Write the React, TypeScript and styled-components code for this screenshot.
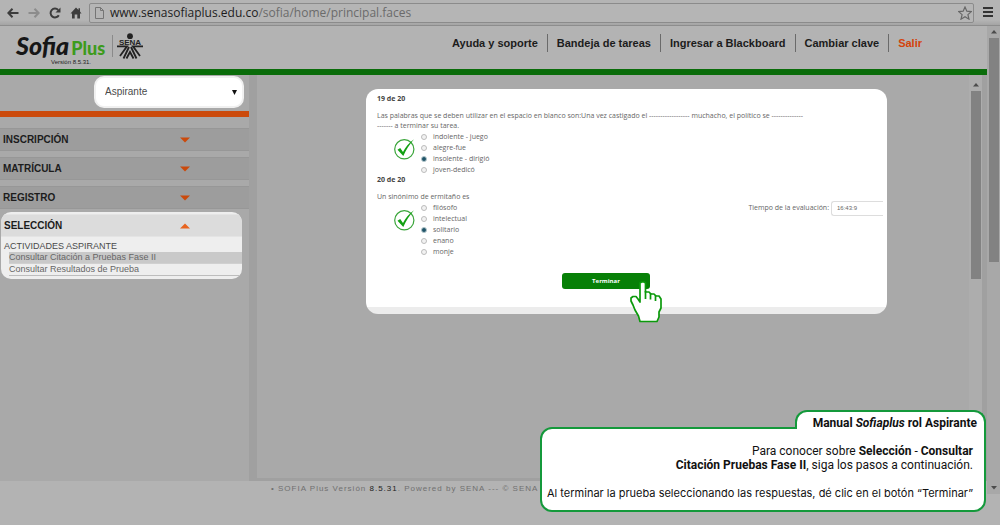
import React from 'react';
import styled, { createGlobalStyle, css } from 'styled-components';

const GlobalStyle = createGlobalStyle`
  *, *::before, *::after { box-sizing: border-box; }
  body { margin: 0; background: #b3b3b3; font-family: "Liberation Sans", Arial, sans-serif; color: #1c1c1c; }
  button, input, select { font: inherit; color: inherit; margin: 0; padding: 0; border: 0; background: none; }
  button { cursor: pointer; }
  a { color: inherit; text-decoration: none; }
  h1, h2, p, ul { margin: 0; padding: 0; font-weight: inherit; }
  ul { list-style: none; }
  svg { display: block; flex: none; }
`;

const Screen = styled.div`
  position: relative;
  display: flex;
  flex-direction: column;
  min-height: 100vh;
`;

const BrowserBar = styled.div`
  display: flex;
  align-items: center;
  height: 26px;
  padding: 0 5px 0 6px;
  background: linear-gradient(#b4b4b4 20px, #a4a4a4);
  border-bottom: 1px solid #8d8d8d;
`;

const BrowserButtons = styled.div`
  display: flex;
  gap: 7px;
  margin-right: 6px;
`;

const IconButton = styled.button`
  display: flex;
  align-items: center;
  justify-content: center;
  width: 14px;
  height: 16px;
`;

const AddressBar = styled.div`
  display: flex;
  align-items: center;
  flex: 1;
  height: 20px;
  margin-right: 7px;
  padding: 0 1px 0 5px;
  border: 1px solid #8b8b8b;
  border-radius: 2px;
  background: #b5b5b5;
  font: 12px/18px "Open Sans", "Noto Sans", sans-serif;
  color: #6b6b6b;
`;

const Url = styled.div`
  flex: 1;
  margin-left: 6px;
  b { font-weight: 400; color: #1d1d1d; }
`;

const Viewport = styled.div`
  display: flex;
  flex: 1;
`;

const Page = styled.div`
  display: flex;
  flex-direction: column;
  flex: 1;
  min-width: 0;
`;

const Header = styled.header`
  display: flex;
  justify-content: space-between;
  height: 49px;
  border-bottom: 6px solid #0a6c0a;
`;

const Brand = styled.div`
  display: flex;
  padding: 7px 0 0 16px;
`;

const Wordmark = styled.div`
  display: grid;
  grid-template-columns: auto auto;
  column-gap: 2px;
  align-items: baseline;
  align-content: start;
`;

const Sofia = styled.span`
  font: italic 900 25px/24px Lato, sans-serif;
  color: #161616;
`;

const Plus = styled.span`
  font: 900 18px/24px Lato, sans-serif;
  color: #3d9b1c;
`;

const Version = styled.span`
  grid-column: 1 / 3;
  margin-top: -1px;
  padding-left: 35px;
  font-size: 6px;
  line-height: 6px;
`;

const BrandRule = styled.span`
  width: 1px;
  height: 22px;
  margin: 2px 4px 0 7px;
  background: #8a8a8a;
`;

const TopNav = styled.nav`
  display: flex;
  align-items: flex-start;
  padding: 8px 65px 0 0;
`;

const NavLink = styled.a<{ $accent?: boolean }>`
  padding: 0 9px;
  border-left: 1px solid #6a6a6a;
  font-size: 11px;
  line-height: 18px;
  font-weight: 700;
  color: ${(p) => (p.$accent ? '#d3430b' : '#1c1c1c')};
  &:first-child { border-left: 0; }
  &:last-child { padding-right: 0; }
`;

const Workspace = styled.div`
  display: flex;
  flex: 1;
  background: #a9a9a9;
`;

const Sidebar = styled.aside`
  width: 249px;
`;

const RoleBar = styled.div`
  display: flex;
  justify-content: flex-end;
  height: 42px;
  padding: 1px 5px 0 0;
  border-bottom: 6px solid #cb4a0c;
`;

const RoleField = styled.label`
  display: flex;
  align-items: center;
  width: 150px;
  height: 32px;
  padding: 0 5px 0 9px;
  border: 2px solid #f0f0f0;
  border-radius: 10px;
  background: #fff;
`;

const RoleSelect = styled.select`
  flex: 1;
  appearance: none;
  font-size: 10px;
  line-height: 14px;
  color: #4a4a4a;
`;

const Sections = styled.div`
  display: flex;
  flex-direction: column;
  gap: 6px;
  padding-top: 11px;
`;

const SectionHead = styled.button<{ $open?: boolean }>`
  display: flex;
  align-items: center;
  justify-content: space-between;
  width: 100%;
  height: 23px;
  padding: 0 59px 0 3px;
  border: 1px solid #979797;
  border-width: 1px 0;
  background: #9d9d9d;
  font-size: 10px;
  line-height: 14px;
  font-weight: 700;
  text-align: left;
  ${(p) => p.$open && css`
    padding-right: 52px;
    border-color: #e4e4e4;
    background: #dcdcdc;
  `}
`;

const OpenSection = styled.div`
  margin: -3px 7px 0 1px;
  padding: 2px 0 3px;
  border-radius: 10px;
  background: #eee;
  overflow: hidden;
`;

const Group = styled.div`
  padding: 3px 0 0 3px;
  font-size: 9px;
  line-height: 12px;
  color: #4a4a4a;
`;

const ActivityLink = styled.a<{ $active?: boolean }>`
  display: block;
  margin-left: 8px;
  border-bottom: 1px solid ${(p) => (p.$active ? '#d0d0d0' : '#bdbdbd')};
  background: ${(p) => (p.$active ? '#c9c9c9' : 'transparent')};
  font-size: 9px;
  line-height: 11px;
  color: #666;
`;

const Splitter = styled.div`
  width: 8px;
  background: #a0a0a0;
`;

const Content = styled.main`
  flex: 1;
  min-width: 0;
  padding: 14px 82px 14px 109px;
  border-bottom: 3px solid #a0a0a0;
`;

const QuizCard = styled.section`
  padding: 5px 4px 25px 11px;
  border-radius: 12px;
  background: linear-gradient(#ececec, #ececec) bottom / 100% 7px no-repeat #fff;
  font: 7px/10px "Open Sans", "Noto Sans", sans-serif;
  color: #666;
`;

const Counter = styled.h2`
  margin-bottom: 7px;
  font-size: 7px;
  line-height: 10px;
  font-weight: 700;
  color: #444;
`;

const QuestionRow = styled.div`
  display: flex;
  justify-content: space-between;
`;

const Answers = styled.div`
  display: flex;
  gap: 6px;
  padding-left: 17px;
`;

const CheckSlot = styled.span`
  padding-top: 7px;
`;

const Option = styled.label`
  display: flex;
  align-items: center;
  gap: 6px;
  height: 11px;
`;

const Radio = styled.input`
  appearance: none;
  width: 6px;
  height: 6px;
  border: 1px solid #bcbcbc;
  border-radius: 50%;
  background: #f2f2f2;
  &:checked { border-color: #b4c6cb; background: #1f5468; }
`;

const Timer = styled.label`
  display: flex;
  align-items: center;
  gap: 2px;
  height: 16px;
  margin-top: 8px;
`;

const TimerInput = styled.input`
  width: 52px;
  height: 15px;
  padding-left: 5px;
  border: 1px solid #ddd;
  border-right: 0;
  border-radius: 3px 0 0 3px;
  font: 6px/12px "Liberation Sans", Arial, sans-serif;
`;

const Actions = styled.div`
  display: flex;
  justify-content: center;
  padding: 16px 48px 0 0;
`;

const FinishButton = styled.button`
  position: relative;
  width: 88px;
  height: 16px;
  border-radius: 3px;
  background: #078007;
  font-size: 6px;
  line-height: 16px;
  font-weight: 700;
  color: #fff;
`;

const Pointer = styled.span`
  position: absolute;
  top: 8px;
  right: -13px;
`;

const Scrollbar = styled.div<{ $inner?: boolean }>`
  display: flex;
  flex-direction: column;
  justify-content: space-between;
  align-items: center;
  width: 13px;
  margin-bottom: ${(p) => (p.$inner ? 0 : 31)}px;
  padding: ${(p) => (p.$inner ? 8 : 4)}px 1px 4px;
  background: ${(p) => (p.$inner ? '#adadad' : '#a8a8a8')};
`;

const Thumb = styled.div<{ $height: string }>`
  width: 10px;
  height: ${(p) => p.$height};
  margin: 4px 0 auto;
  background: #828282;
`;

const Gutter = styled.div`
  width: 5px;
  background: #a0a0a0;
`;

const Footer = styled.footer`
  height: 44px;
  padding: 2px 0 0 271px;
  font-size: 8px;
  line-height: 12px;
  letter-spacing: 1px;
  color: #707070;
  white-space: nowrap;
  overflow: hidden;
  b { font-weight: 400; color: #222; }
`;

const Callout = styled.aside`
  position: absolute;
  right: 14px;
  bottom: 13px;
  display: flex;
  flex-direction: column;
  align-items: flex-end;
  width: 446px;
  font: 12px/14px Roboto, "Liberation Sans", sans-serif;
  color: #111;
`;

const CalloutTab = styled.h1`
  z-index: 1;
  height: 19px;
  margin-bottom: -2px;
  padding: 4px 7px 0 16px;
  border: 2px solid #14993b;
  border-bottom: 0;
  border-radius: 12px 12px 0 0;
  background: #fff;
  font-size: 12px;
  line-height: 14px;
  font-weight: 700;
`;

const CalloutBody = styled.div`
  width: 100%;
  padding: 15px 11px 10px 3px;
  border: 2px solid #14993b;
  border-radius: 12px 0 12px 12px;
  background: #fff;
  text-align: right;
`;

const Closing = styled.p`
  margin-top: 14px;
  font: 11px/14px Inter, "Liberation Sans", sans-serif;
`;

const Arrow = ({ up }: { up?: boolean }) => (
  <svg width="10" height="6" viewBox="0 0 10 6">
    <path d={up ? 'M0 5.5L5 .5L10 5.5Z' : 'M0 .5L5 5.5L10 .5Z'} fill={up ? '#e8641f' : '#cb4a0c'} />
  </svg>
);

const ScrollArrow = ({ down }: { down?: boolean }) => (
  <svg width="6" height="4" viewBox="0 0 6 4">
    <path d={down ? 'M0 0H6L3 3.5Z' : 'M0 3.5H6L3 0Z'} fill="#4c4c4c" />
  </svg>
);

const CheckMark = () => (
  <svg width="21" height="22" viewBox="0 0 21 22">
    <circle cx="10.3" cy="11.3" r="9.6" fill="none" stroke="#3aa53a" strokeWidth="1.2" />
    <path d="M3.500 11.800L6.200 10L9 14C11.500 9 14.500 5 20 1.200C15.500 6.500 12 11.500 9.300 18Z" fill="#12a012" />
  </svg>
);

const SenaLogo = () => (
  <svg width="26" height="27" viewBox="0 0 26 27" fill="none" stroke="#222" strokeWidth="1.800">
    <circle cx="13" cy="3.2" r="2.900" fill="#222" stroke="none" />
    <text x="13" y="11.500" textAnchor="middle" fontFamily="Liberation Sans, sans-serif" fontWeight="700" fontSize="8" fill="#222" stroke="none">SENA</text>
    <path d="M0 13.400H10L3 23M26 13.400H16L23 23M12 14L6.500 25.500M14 14L19.500 25.500M9.500 25.500L13 19L16.500 25.500" />
  </svg>
);

const Hand = () => (
  <svg width="33" height="42" viewBox="0 0 33 42">
    <path
      d="M10 4V2L11.500 1H14L15.500 2V11H19L21 13H24L26 15H29L31 18V27L29 31V36L27 40.500H10L8.500 35L5 29L3 24L1 20V17L3 15.500H6L8 18L10 21Z"
      fill="#fff" stroke="#0b9a0b" strokeWidth="1.700" strokeLinejoin="round"
    />
    <path d="M15.500 10V18M20.500 12V18.500M25.500 14V20" fill="none" stroke="#0b9a0b" strokeWidth="1.700" />
  </svg>
);

const questions = [
  {
    counter: '19 de 20',
    lines: [
      'Las palabras que se deben utilizar en el espacio en blanco son:Una vez castigado el ------------------ muchacho, el político se --------------',
      '------- a terminar su tarea.',
    ],
    options: ['indolente - juego', 'alegre-fue', 'insolente - dirigió', 'joven-dedicó'],
    selected: 2,
  },
  {
    counter: '20 de 20',
    lines: ['Un sinónimo de ermitaño es'],
    options: ['filósofo', 'intelectual', 'solitario', 'enano', 'monje'],
    selected: 2,
    timer: '16:43:9',
  },
];

const navLinks = ['Ayuda y soporte', 'Bandeja de tareas', 'Ingresar a Blackboard', 'Cambiar clave'];

export default function App() {
  return (
    <>
      <GlobalStyle />
      <Screen>
        <BrowserBar>
          <BrowserButtons>
            <IconButton aria-label="Atrás">
              <svg width="12" height="10" viewBox="0 0 12 10" fill="none" stroke="#3c3c3c" strokeWidth="2"><path d="M11.500 5H1.500M5.500 .8L1.400 5L5.500 9.200" /></svg>
            </IconButton>
            <IconButton aria-label="Adelante">
              <svg width="12" height="10" viewBox="0 0 12 10" fill="none" stroke="#8c8c8c" strokeWidth="2"><path d="M.5 5H10.500M6.500 .8L10.600 5L6.500 9.200" /></svg>
            </IconButton>
            <IconButton aria-label="Recargar">
              <svg width="12" height="12" viewBox="0 0 12 12"><path d="M9.800 8.200A4.400 4.400 0 1 1 9.200 3" fill="none" stroke="#3c3c3c" strokeWidth="2" /><path d="M11.500 .5V5.500H6.500Z" fill="#3c3c3c" /></svg>
            </IconButton>
            <IconButton aria-label="Inicio">
              <svg width="12" height="12" viewBox="0 0 12 12" fill="#3c3c3c"><path d="M6 .5L8.500 3V1.200H10V4.500L11.500 6.500H10V11.500H7.300V7.500H4.700V11.500H2V6.500H.5Z" /></svg>
            </IconButton>
          </BrowserButtons>
          <AddressBar>
            <svg width="9" height="12" viewBox="0 0 9 12" fill="none" stroke="#757575"><path d="M.5 .5H5.500L8.500 3.500V11.500H.5ZM5.500 .5V3.500H8.500" /></svg>
            <Url><b>www.senasofiaplus.edu.co</b>/sofia/home/principal.faces</Url>
            <svg width="14" height="14" viewBox="0 0 13 13" fill="none" stroke="#666" strokeWidth="1.100"><path d="M6.500 .9L8.200 4.800L12.400 5.200L9.200 8L10.200 12.200L6.500 10L2.800 12.200L3.800 8L.6 5.200L4.800 4.800Z" /></svg>
          </AddressBar>
          <IconButton aria-label="Menú">
            <svg width="10" height="11" viewBox="0 0 10 11" fill="#333"><path d="M0 0H10V2H0ZM0 4H10V6H0ZM0 8H10V10H0Z" /></svg>
          </IconButton>
        </BrowserBar>
        <Viewport>
          <Page>
            <Header>
              <Brand>
                <Wordmark>
                  <Sofia>Sofia</Sofia>
                  <Plus>Plus</Plus>
                  <Version>Versión 8.5.31.</Version>
                </Wordmark>
                <BrandRule />
                <SenaLogo />
              </Brand>
              <TopNav>
                {navLinks.map((label) => <NavLink key={label} href="#">{label}</NavLink>)}
                <NavLink href="#" $accent>Salir</NavLink>
              </TopNav>
            </Header>
            <Workspace>
              <Sidebar>
                <RoleBar>
                  <RoleField>
                    <RoleSelect aria-label="Rol" defaultValue="Aspirante">
                      <option>Aspirante</option>
                    </RoleSelect>
                    <svg width="5" height="5" viewBox="0 0 5 5"><path d="M0 0H5L2.500 5Z" fill="#111" /></svg>
                  </RoleField>
                </RoleBar>
                <Sections>
                  {['INSCRIPCIÓN', 'MATRÍCULA', 'REGISTRO'].map((name) => (
                    <SectionHead key={name}>{name}<Arrow /></SectionHead>
                  ))}
                  <OpenSection>
                    <SectionHead $open>SELECCIÓN<Arrow up /></SectionHead>
                    <Group>ACTIVIDADES ASPIRANTE</Group>
                    <ActivityLink href="#" $active>Consultar Citación a Pruebas Fase II</ActivityLink>
                    <ActivityLink href="#">Consultar Resultados de Prueba</ActivityLink>
                  </OpenSection>
                </Sections>
              </Sidebar>
              <Splitter />
              <Content>
                <QuizCard>
                  {questions.map((q, n) => (
                    <div key={q.counter}>
                      <Counter>{q.counter}</Counter>
                      <QuestionRow>
                        <div>
                          {q.lines.map((line) => <p key={line}>{line}</p>)}
                          <Answers>
                            <CheckSlot><CheckMark /></CheckSlot>
                            <div>
                              {q.options.map((option, i) => (
                                <Option key={option}>
                                  <Radio type="radio" name={`q${n}`} defaultChecked={i === q.selected} />
                                  {option}
                                </Option>
                              ))}
                            </div>
                          </Answers>
                        </div>
                        {q.timer && (
                          <Timer>
                            Tiempo de la evaluación:
                            <TimerInput defaultValue={q.timer} />
                          </Timer>
                        )}
                      </QuestionRow>
                    </div>
                  ))}
                  <Actions>
                    <FinishButton>
                      Terminar
                      <Pointer><Hand /></Pointer>
                    </FinishButton>
                  </Actions>
                </QuizCard>
              </Content>
              <Scrollbar $inner>
                <ScrollArrow />
                <Thumb $height="188px" />
              </Scrollbar>
              <Gutter />
            </Workspace>
            <Footer>• SOFIA Plus Versión <b>8.5.31</b>. Powered by SENA --- © SENA 2014</Footer>
          </Page>
          <Scrollbar>
            <ScrollArrow />
            <Thumb $height="224px" />
            <ScrollArrow down />
          </Scrollbar>
        </Viewport>
        <Callout>
          <CalloutTab>Manual <i>Sofiaplus</i> rol Aspirante</CalloutTab>
          <CalloutBody>
            <p>
              Para conocer sobre <b>Selección</b> - <b>Consultar</b><br />
              <b>Citación Pruebas Fase II</b>, siga los pasos a continuación.
            </p>
            <Closing>Al terminar la prueba seleccionando las respuestas, dé clic en el botón “Terminar”</Closing>
          </CalloutBody>
        </Callout>
      </Screen>
    </>
  );
}
